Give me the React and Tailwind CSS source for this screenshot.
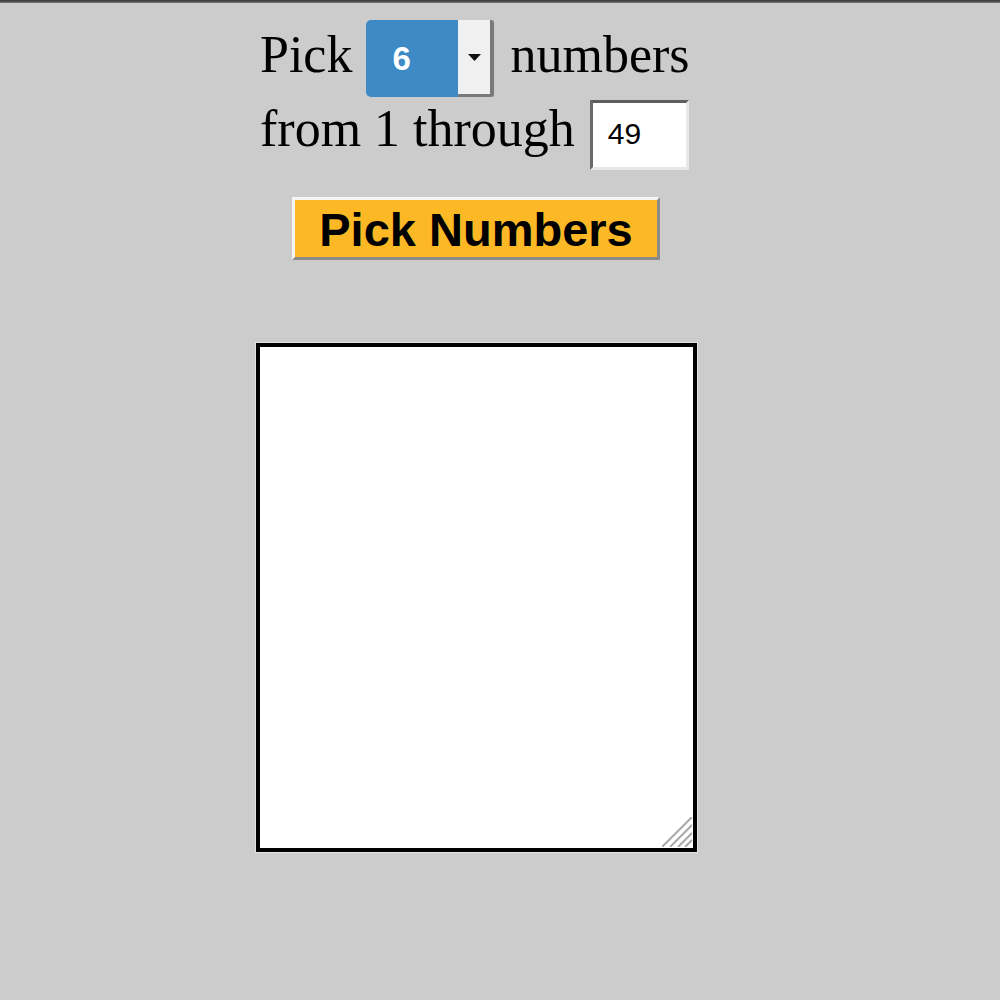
import React, { useState } from "react";

const serif = { fontFamily: '"Liberation Serif", "Times New Roman", serif' };
const sans = { fontFamily: '"Liberation Sans", Arial, sans-serif' };

function CountSelect({ value }) {
  return (
    <div className="flex h-[77px] w-[128px] cursor-pointer">
      <div
        className="flex w-[92px] items-center rounded-l-[5px] bg-[#3d8ac7] pl-[26px] text-[33px] font-semibold text-white"
        style={sans}
      >
        {value}
      </div>
      <div className="flex w-[36px] items-center justify-center rounded-r-[3px] border-r-[4px] border-b-[3px] border-[#7a7a7a] bg-[#f0f0f0]">
        <svg width="13" height="7" viewBox="0 0 13 7">
          <path d="M0 0h13L6.5 7z" fill="#111" />
        </svg>
      </div>
    </div>
  );
}

// corner grip drawn over the output box
function Grip() {
  return (
    <svg
      className="pointer-events-none absolute right-[5px] bottom-[5px]"
      width="30"
      height="30"
      viewBox="0 0 30 30"
    >
      {[0, 8, 16, 23].map((o) => (
        <line key={o} x1={o} y1="30" x2="30" y2={o} stroke="#a8a8a8" strokeWidth="2" />
      ))}
    </svg>
  );
}

export default function App() {
  const [max, setMax] = useState("49");
  const [out, setOut] = useState("");

  return (
    <div className="min-h-[1000px] bg-[#cccccc]">
      <div className="h-[3px] bg-gradient-to-b from-[#333] to-[#777]" />
      <div className="flex w-[952px] flex-col items-center">
        <div className="mt-[17px] w-[432px] text-[52px] leading-none text-black" style={serif}>
          <div className="flex items-center">
            <span className="relative top-[-4px]">Pick</span>
            <div className="ml-[14px] mr-[16px]">
              <CountSelect value="6" />
            </div>
            <span className="relative top-[-4px]">numbers</span>
          </div>
          <div className="mt-[3px] flex items-center">
            <span className="relative top-[-6px]">from 1 through</span>
            <input
              value={max}
              onChange={(e) => setMax(e.target.value)}
              className="ml-[15px] h-[70px] w-[99px] border-[3px] border-t-[#5e5e5e] border-l-[#6a6a6a] border-r-[#e8e8e8] border-b-[#e8e8e8] bg-white pb-[2px] pl-[15px] text-[30px] text-black outline-none"
              style={sans}
            />
          </div>
        </div>

        <button
          onClick={() => setOut("3 12 17 25 38 44")}
          className="mt-[27px] h-[63px] w-[368px] border-[3px] border-t-[#f4f4f4] border-l-[#f4f4f4] border-r-[#8a8a8a] border-b-[#8a8a8a] bg-[#fdb826] pt-[2px] text-[47px] font-bold leading-none text-black"
          style={sans}
        >
          Pick Numbers
        </button>

        <div className="relative mt-[82px] border border-[#e2e2e2]">
          <textarea
            value={out}
            onChange={(e) => setOut(e.target.value)}
            className="block h-[509px] w-[441px] resize-none border-[4px] border-black bg-white p-2 text-[20px] outline-none"
          />
          <Grip />
        </div>
      </div>
    </div>
  );
}
